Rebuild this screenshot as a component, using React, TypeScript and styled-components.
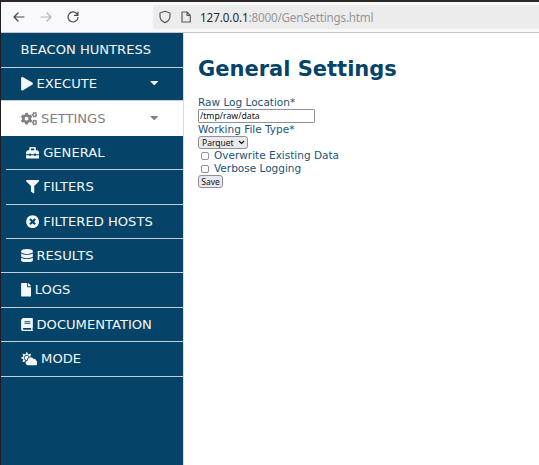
import React from "react";
import styled, { createGlobalStyle } from "styled-components";
import type { IconType } from "react-icons";
import {
  FaBook,
  FaCaretDown,
  FaCloudSun,
  FaCogs,
  FaDatabase,
  FaFile,
  FaFilter,
  FaPlay,
  FaTimesCircle,
  FaToolbox,
} from "react-icons/fa";

const navy = "#054468";

const GlobalStyle = createGlobalStyle`
  * { box-sizing: border-box; }
  body { margin: 0; background: #fff; font-family: "DejaVu Sans", sans-serif; overflow: hidden; }
`;

const Window = styled.div`
  display: flex;
  flex-direction: column;
  width: 539px;
  height: 465px;
  border-top: 2px solid #2c2829;
  border-left: 1px solid #201c26;
  overflow: hidden;
`;

const Toolbar = styled.header`
  display: flex;
  align-items: center;
  flex: 0 0 31px;
  padding-left: 11px;
  background: #f9f9fb;
  border-bottom: 1px solid #c6c6c8;
`;

const ToolIcon = styled.svg<{ $tone?: string; $gap?: number }>`
  display: block;
  flex: none;
  width: 14px;
  height: 14px;
  margin-right: ${(p) => p.$gap ?? 13}px;
  fill: none;
  stroke: ${(p) => p.$tone ?? "#47464b"};
  stroke-width: 1.2;
  stroke-linecap: round;
  stroke-linejoin: round;
`;

const AddressBar = styled.div`
  display: flex;
  align-items: center;
  flex: 1;
  height: 24px;
  margin-left: 73px;
  padding-left: 5px;
  border-radius: 3px 0 0 3px;
  background: #ececed;
`;

const Address = styled.span`
  font: 11.7px/16px "Noto Sans", sans-serif;
  letter-spacing: -0.22px;
  color: #97979a;
  white-space: pre;
`;

const Host = styled.span`
  color: #29282c;
  letter-spacing: -0.1px;
`;

const Page = styled.div`
  display: flex;
  flex: 1;
  min-height: 0;
`;

const Sidebar = styled.nav`
  flex: 0 0 183px;
  background: ${navy};
  border-right: 1px solid #d3dce2;
`;

const NavRow = styled.a<{ $nested?: boolean; $active?: boolean; $height: number }>`
  display: flex;
  align-items: center;
  height: ${(p) => p.$height}px;
  margin-left: ${(p) => (p.$nested ? 5 : 0)}px;
  padding: ${(p) => (p.$active ? 2 : 0)}px 25px 0 ${(p) => (p.$nested ? 20 : 19.5)}px;
  border-bottom: 1px solid ${(p) => (p.$active ? "#fff" : "#c3d0d9")};
  background: ${(p) => (p.$active ? "#fff" : "transparent")};
  color: ${(p) => (p.$active ? "#818181" : "#f4f7f9")};
  font-size: 13.1px;
  line-height: 16px;
  white-space: nowrap;
`;

const IconSlot = styled.span<{ $width: number }>`
  display: flex;
  flex: none;
  width: ${(p) => p.$width}px;
  margin-right: 4px;

  svg {
    display: block;
    flex: none;
    width: 100%;
    height: 13.4px;
  }
`;

const NavLabel = styled.span`
  flex: 1;
`;

const Caret = styled(FaCaretDown)`
  flex: none;
  width: 8.5px;
  height: 13px;
  margin: 0 -0.5px 4px 0;
`;

const Content = styled.main`
  flex: 1;
  padding: 24px 0 0 14px;
  color: ${navy};
`;

const Title = styled.h1`
  margin: 0 0 14px;
  font-size: 21px;
  line-height: 25px;
  white-space: nowrap;
`;

const FieldLabel = styled.label`
  display: block;
  height: 13px;
  font-size: 10.5px;
  line-height: 13px;
  color: #1a5478;
`;

const TextInput = styled.input`
  display: block;
  width: 117px;
  height: 14px;
  margin: 0;
  padding: 0 1px;
  border: 1px solid #8f8f9d;
  border-radius: 1px;
  color: #111;
  font: 8.7px/12px "Noto Sans", sans-serif;
`;

const SelectBox = styled.button`
  display: flex;
  align-items: center;
  justify-content: space-between;
  width: 50px;
  height: 13px;
  padding: 0 2px 0 3px;
  border: 1px solid #8f8f9d;
  border-radius: 3px;
  background: #e9e9ed;
  color: #111;
  font: 8.5px/11px "Noto Sans", sans-serif;
`;

const CheckRow = styled.label`
  display: flex;
  align-items: center;
  height: 13px;
  padding-left: 3px;
  font-size: 10.5px;
  line-height: 13px;
  color: #1a5478;
  white-space: nowrap;
`;

const Checkbox = styled.input`
  appearance: none;
  width: 8px;
  height: 8px;
  margin: 0 5px 0 0;
  border: 1px solid #8f8f9d;
  border-radius: 2px;
  background: #fff;
`;

const SaveButton = styled.button`
  display: block;
  width: 25px;
  height: 13px;
  padding: 0;
  border: 1px solid #8f8f9d;
  border-radius: 3px;
  background: #e9e9ed;
  color: #111;
  font: 8.5px/10px "Noto Sans", sans-serif;
`;

type Item = {
  label: string;
  height: number;
  icon?: IconType;
  width?: number;
  nested?: boolean;
  active?: boolean;
  menu?: boolean;
};

const items: Item[] = [
  { label: "BEACON HUNTRESS", height: 35 },
  { label: "EXECUTE", height: 33, icon: FaPlay, width: 12, menu: true },
  { label: "SETTINGS", height: 35, icon: FaCogs, width: 16.6, active: true, menu: true },
  { label: "GENERAL", height: 34, icon: FaToolbox, width: 13.2, nested: true },
  { label: "FILTERS", height: 35, icon: FaFilter, width: 13.2, nested: true },
  { label: "FILTERED HOSTS", height: 34, icon: FaTimesCircle, width: 13.2, nested: true },
  { label: "RESULTS", height: 34, icon: FaDatabase, width: 12 },
  { label: "LOGS", height: 35, icon: FaFile, width: 10.3 },
  { label: "DOCUMENTATION", height: 34, icon: FaBook, width: 12 },
  { label: "MODE", height: 35, icon: FaCloudSun, width: 16.6 },
];

export default function App() {
  return (
    <>
      <GlobalStyle />
      <Window>
        <Toolbar>
          <ToolIcon viewBox="0 0 14 14">
            <path d="M12 7H2M6 3L2 7l4 4" />
          </ToolIcon>
          <ToolIcon viewBox="0 0 14 14" $tone="#b4b4b6">
            <path d="M2 7h10M8 3l4 4-4 4" />
          </ToolIcon>
          <ToolIcon viewBox="0 0 14 14" $gap={0}>
            <path d="M11.2 4.2A5 5 0 1 0 12 7.5M11.9 2v3.4H8.5" />
          </ToolIcon>
          <AddressBar>
            <ToolIcon viewBox="0 0 14 14" $tone="#5b5b60" $gap={7}>
              <path d="M7 1.3L2 3v3.2c0 3 2 5.2 5 6.4 3-1.2 5-3.4 5-6.4V3z" />
            </ToolIcon>
            <ToolIcon viewBox="0 0 14 14" $tone="#5b5b60" $gap={7}>
              <path d="M3 2h5l3.3 3.3V12H3zM8 2v3.3h3.3" />
            </ToolIcon>
            <Address>
              <Host>127.0.0.1</Host>:8000/GenSettings.html
            </Address>
          </AddressBar>
        </Toolbar>
        <Page>
          <Sidebar>
            {items.map(({ label, height, icon: Icon, width = 13, nested, active, menu }) => (
              <NavRow key={label} $height={height} $nested={nested} $active={active}>
                {Icon && (
                  <IconSlot $width={width}>
                    <Icon />
                  </IconSlot>
                )}
                <NavLabel>{label}</NavLabel>
                {menu && <Caret />}
              </NavRow>
            ))}
          </Sidebar>
          <Content>
            <Title>General Settings</Title>
            <FieldLabel htmlFor="location">Raw Log Location*</FieldLabel>
            <TextInput id="location" defaultValue="/tmp/raw/data" />
            <FieldLabel>Working File Type*</FieldLabel>
            <SelectBox type="button">
              Parquet
              <svg width="7" height="5" viewBox="0 0 7 5" fill="none" stroke="#111" strokeWidth="1.2">
                <path d="M1 1l2.5 2.5L6 1" />
              </svg>
            </SelectBox>
            <CheckRow>
              <Checkbox type="checkbox" />
              Overwrite Existing Data
            </CheckRow>
            <CheckRow>
              <Checkbox type="checkbox" />
              Verbose Logging
            </CheckRow>
            <SaveButton type="button">Save</SaveButton>
          </Content>
        </Page>
      </Window>
    </>
  );
}
